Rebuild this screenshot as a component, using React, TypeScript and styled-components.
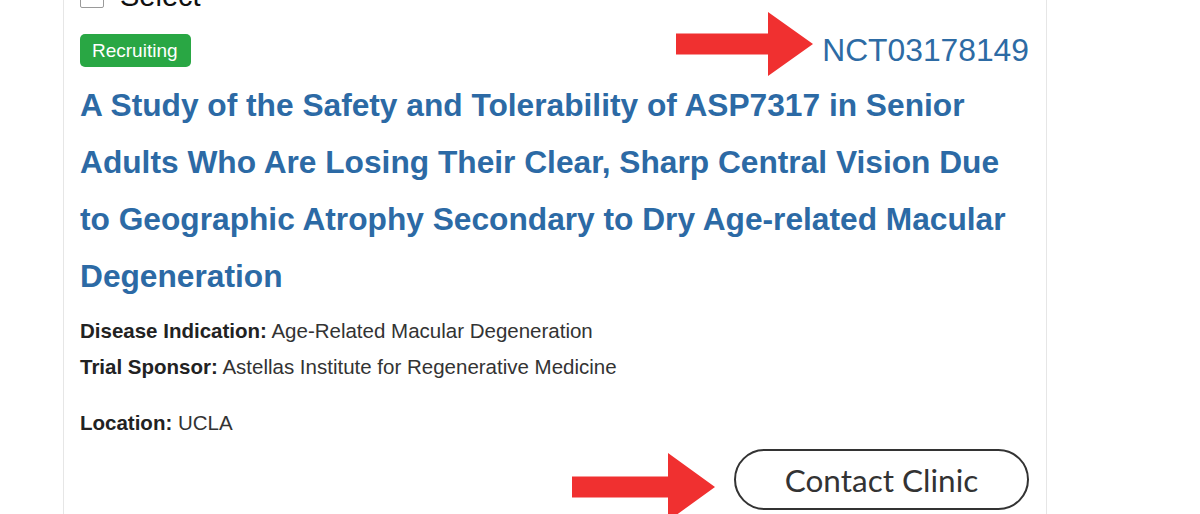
import React from "react";
import styled, { createGlobalStyle } from "styled-components";

const Global = createGlobalStyle`
  html, body { margin: 0; padding: 0; background: #fff; }
  body { width: 1200px; height: 514px; overflow: hidden; position: relative; font-family: "Liberation Sans", Arial, sans-serif; }
`;

const Page = styled.div`
  position: relative;
  width: 1200px;
  height: 514px;
  overflow: hidden;
`;

const Card = styled.div`
  margin: -16px 0 0 63px;
  width: 949px;
  padding: 0 17px 24px 16px;
  border-left: 1px solid #e6e6e6;
  border-right: 1px solid #e6e6e6;
  display: flex;
  flex-direction: column;
`;

const SelectRow = styled.label`
  display: flex;
  align-items: center;
  gap: 16px;
  height: 24px;
  font-size: 29px;
  color: #111;
`;

const Box = styled.span`
  width: 22px;
  height: 22px;
  border: 1px solid #9a9a9a;
  border-radius: 2px;
  background: #fff;
`;

const HeaderRow = styled.div`
  margin-top: 26px;
  display: flex;
  justify-content: space-between;
  align-items: center;
  height: 33px;
`;

const Badge = styled.span`
  display: inline-flex;
  align-items: center;
  height: 33px;
  padding: 0 13px 0 12px;
  background: #29a744;
  color: #fff;
  border-radius: 5px;
  font-size: 19px;
`;

const TrialId = styled.a`
  color: #2d6ba4;
  font-size: 31.8px;
  text-decoration: none;
`;

const Title = styled.h2`
  margin: 10px 0 0;
  font-size: 31.7px;
  line-height: 57px;
  font-weight: bold;
  color: #2c6aa5;
`;

const Details = styled.div`
  margin-top: 8px;
  font-size: 20.5px;
  line-height: 36px;
  color: #333;
`;

const Label = styled.b`
  color: #222;
`;

const Location = styled.div`
  margin-top: 20px;
  font-size: 20.5px;
  line-height: 36px;
  color: #333;
`;

const ButtonRow = styled.div`
  margin-top: 8px;
  display: flex;
  justify-content: flex-end;
`;

const ContactButton = styled.button`
  width: 295px;
  height: 61px;
  border: 2.5px solid #333;
  border-radius: 31px;
  background: #fff;
  font-family: Lato, "Open Sans", sans-serif;
  font-size: 31.5px;
  color: #333;
  cursor: pointer;
`;

const Arrow = styled.svg<{ $x: number; $y: number }>`
  position: absolute;
  left: ${(p) => p.$x}px;
  top: ${(p) => p.$y}px;
  overflow: visible;
`;

const RedArrow = ({ x, y, shaft, head, h, sh }: { x: number; y: number; shaft: number; head: number; h: number; sh: number }) => {
  const mid = h / 2;
  const d = `M0 ${mid - sh / 2} H${shaft} V0 L${shaft + head} ${mid} L${shaft} ${h} V${mid + sh / 2} H0 Z`;
  return (
    <Arrow $x={x} $y={y} width={shaft + head} height={h}>
      <path d={d} fill="#f03030" />
    </Arrow>
  );
};

export default function App() {
  return (
    <Page>
      <Global />
      <Card>
        <SelectRow>
          <Box />
          Select
        </SelectRow>
        <HeaderRow>
          <Badge>Recruiting</Badge>
          <TrialId href="#">NCT03178149</TrialId>
        </HeaderRow>
        <Title>
          A Study of the Safety and Tolerability of ASP7317 in Senior Adults Who Are Losing Their Clear, Sharp Central Vision Due
          to Geographic Atrophy Secondary to Dry Age-related Macular Degeneration
        </Title>
        <Details>
          <div>
            <Label>Disease Indication:</Label> Age-Related Macular Degeneration
          </div>
          <div>
            <Label>Trial Sponsor:</Label> Astellas Institute for Regenerative Medicine
          </div>
        </Details>
        <Location>
          <Label>Location:</Label> UCLA
        </Location>
        <ButtonRow>
          <ContactButton>Contact Clinic</ContactButton>
        </ButtonRow>
      </Card>
      <RedArrow x={676} y={12} shaft={92} head={45} h={64} sh={21} />
      <RedArrow x={572} y={453} shaft={96} head={47} h={68} sh={21} />
    </Page>
  );
}
